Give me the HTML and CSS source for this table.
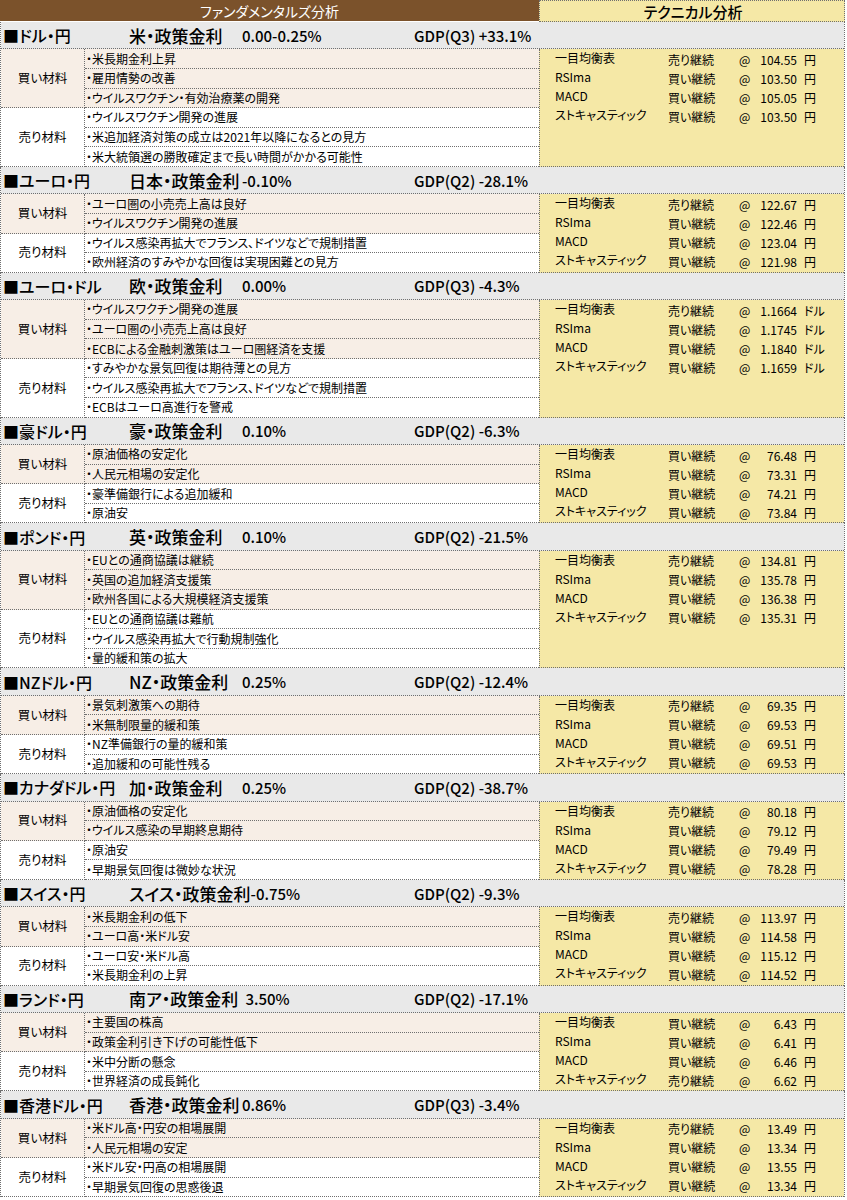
FILE: index.html
```html
<!DOCTYPE html>
<html lang="ja">
<head>
<meta charset="utf-8">
<title>為替 ファンダメンタルズ・テクニカル分析</title>
<link rel="stylesheet" href="styles.css">
</head>
<body>
<div class="sheet">
  <div class="top">
    <div class="top-fund">ファンダメンタルズ分析</div>
    <div class="top-tech">テクニカル分析</div>
  </div>

  <section class="pair">
    <div class="pair-head"><span class="pair-name">■ドル・円</span><span class="policy"><span class="policy-label">米・政策金利</span><span class="rate">0.00-0.25%</span></span><span class="gdp">GDP(Q3) +33.1%</span></div>
    <div class="pair-body">
      <div class="fund">
        <div class="group buy"><div class="group-label">買い材料</div><ul class="items"><li>・米長期金利上昇</li><li>・雇用情勢の改善</li><li>・ウイルスワクチン・有効治療薬の開発</li></ul></div>
        <div class="group sell"><div class="group-label">売り材料</div><ul class="items"><li>・ウイルスワクチン開発の進展</li><li>・米追加経済対策の成立は2021年以降になるとの見方</li><li>・米大統領選の勝敗確定まで長い時間がかかる可能性</li></ul></div>
      </div>
      <div class="tech">
        <div class="tech-row"><span class="tech-name">一目均衡表</span><span class="tech-signal">売り継続</span><span class="tech-at">@</span><span class="tech-value">104.55</span><span class="tech-unit">円</span></div>
        <div class="tech-row"><span class="tech-name">RSIma</span><span class="tech-signal">買い継続</span><span class="tech-at">@</span><span class="tech-value">103.50</span><span class="tech-unit">円</span></div>
        <div class="tech-row"><span class="tech-name">MACD</span><span class="tech-signal">買い継続</span><span class="tech-at">@</span><span class="tech-value">105.05</span><span class="tech-unit">円</span></div>
        <div class="tech-row"><span class="tech-name">ストキャスティック</span><span class="tech-signal">買い継続</span><span class="tech-at">@</span><span class="tech-value">103.50</span><span class="tech-unit">円</span></div>
      </div>
    </div>
  </section>

  <section class="pair">
    <div class="pair-head"><span class="pair-name">■ユーロ・円</span><span class="policy"><span class="policy-label">日本・政策金利</span><span class="rate">-0.10%</span></span><span class="gdp">GDP(Q2) -28.1%</span></div>
    <div class="pair-body">
      <div class="fund">
        <div class="group buy"><div class="group-label">買い材料</div><ul class="items"><li>・ユーロ圏の小売売上高は良好</li><li>・ウイルスワクチン開発の進展</li></ul></div>
        <div class="group sell"><div class="group-label">売り材料</div><ul class="items"><li>・ウイルス感染再拡大でフランス、ドイツなどで規制措置</li><li>・欧州経済のすみやかな回復は実現困難との見方</li></ul></div>
      </div>
      <div class="tech">
        <div class="tech-row"><span class="tech-name">一目均衡表</span><span class="tech-signal">売り継続</span><span class="tech-at">@</span><span class="tech-value">122.67</span><span class="tech-unit">円</span></div>
        <div class="tech-row"><span class="tech-name">RSIma</span><span class="tech-signal">買い継続</span><span class="tech-at">@</span><span class="tech-value">122.46</span><span class="tech-unit">円</span></div>
        <div class="tech-row"><span class="tech-name">MACD</span><span class="tech-signal">買い継続</span><span class="tech-at">@</span><span class="tech-value">123.04</span><span class="tech-unit">円</span></div>
        <div class="tech-row"><span class="tech-name">ストキャスティック</span><span class="tech-signal">買い継続</span><span class="tech-at">@</span><span class="tech-value">121.98</span><span class="tech-unit">円</span></div>
      </div>
    </div>
  </section>

  <section class="pair">
    <div class="pair-head"><span class="pair-name">■ユーロ・ドル</span><span class="policy"><span class="policy-label">欧・政策金利</span><span class="rate">0.00%</span></span><span class="gdp">GDP(Q3) -4.3%</span></div>
    <div class="pair-body">
      <div class="fund">
        <div class="group buy"><div class="group-label">買い材料</div><ul class="items"><li>・ウイルスワクチン開発の進展</li><li>・ユーロ圏の小売売上高は良好</li><li>・ECBによる金融刺激策はユーロ圏経済を支援</li></ul></div>
        <div class="group sell"><div class="group-label">売り材料</div><ul class="items"><li>・すみやかな景気回復は期待薄との見方</li><li>・ウイルス感染再拡大でフランス、ドイツなどで規制措置</li><li>・ECBはユーロ高進行を警戒</li></ul></div>
      </div>
      <div class="tech">
        <div class="tech-row"><span class="tech-name">一目均衡表</span><span class="tech-signal">売り継続</span><span class="tech-at">@</span><span class="tech-value">1.1664</span><span class="tech-unit">ドル</span></div>
        <div class="tech-row"><span class="tech-name">RSIma</span><span class="tech-signal">買い継続</span><span class="tech-at">@</span><span class="tech-value">1.1745</span><span class="tech-unit">ドル</span></div>
        <div class="tech-row"><span class="tech-name">MACD</span><span class="tech-signal">買い継続</span><span class="tech-at">@</span><span class="tech-value">1.1840</span><span class="tech-unit">ドル</span></div>
        <div class="tech-row"><span class="tech-name">ストキャスティック</span><span class="tech-signal">買い継続</span><span class="tech-at">@</span><span class="tech-value">1.1659</span><span class="tech-unit">ドル</span></div>
      </div>
    </div>
  </section>

  <section class="pair">
    <div class="pair-head"><span class="pair-name">■豪ドル・円</span><span class="policy"><span class="policy-label">豪・政策金利</span><span class="rate">0.10%</span></span><span class="gdp">GDP(Q2) -6.3%</span></div>
    <div class="pair-body">
      <div class="fund">
        <div class="group buy"><div class="group-label">買い材料</div><ul class="items"><li>・原油価格の安定化</li><li>・人民元相場の安定化</li></ul></div>
        <div class="group sell"><div class="group-label">売り材料</div><ul class="items"><li>・豪準備銀行による追加緩和</li><li>・原油安</li></ul></div>
      </div>
      <div class="tech">
        <div class="tech-row"><span class="tech-name">一目均衡表</span><span class="tech-signal">買い継続</span><span class="tech-at">@</span><span class="tech-value">76.48</span><span class="tech-unit">円</span></div>
        <div class="tech-row"><span class="tech-name">RSIma</span><span class="tech-signal">買い継続</span><span class="tech-at">@</span><span class="tech-value">73.31</span><span class="tech-unit">円</span></div>
        <div class="tech-row"><span class="tech-name">MACD</span><span class="tech-signal">買い継続</span><span class="tech-at">@</span><span class="tech-value">74.21</span><span class="tech-unit">円</span></div>
        <div class="tech-row"><span class="tech-name">ストキャスティック</span><span class="tech-signal">買い継続</span><span class="tech-at">@</span><span class="tech-value">73.84</span><span class="tech-unit">円</span></div>
      </div>
    </div>
  </section>

  <section class="pair">
    <div class="pair-head"><span class="pair-name">■ポンド・円</span><span class="policy"><span class="policy-label">英・政策金利</span><span class="rate">0.10%</span></span><span class="gdp">GDP(Q2) -21.5%</span></div>
    <div class="pair-body">
      <div class="fund">
        <div class="group buy"><div class="group-label">買い材料</div><ul class="items"><li>・EUとの通商協議は継続</li><li>・英国の追加経済支援策</li><li>・欧州各国による大規模経済支援策</li></ul></div>
        <div class="group sell"><div class="group-label">売り材料</div><ul class="items"><li>・EUとの通商協議は難航</li><li>・ウイルス感染再拡大で行動規制強化</li><li>・量的緩和策の拡大</li></ul></div>
      </div>
      <div class="tech">
        <div class="tech-row"><span class="tech-name">一目均衡表</span><span class="tech-signal">売り継続</span><span class="tech-at">@</span><span class="tech-value">134.81</span><span class="tech-unit">円</span></div>
        <div class="tech-row"><span class="tech-name">RSIma</span><span class="tech-signal">買い継続</span><span class="tech-at">@</span><span class="tech-value">135.78</span><span class="tech-unit">円</span></div>
        <div class="tech-row"><span class="tech-name">MACD</span><span class="tech-signal">買い継続</span><span class="tech-at">@</span><span class="tech-value">136.38</span><span class="tech-unit">円</span></div>
        <div class="tech-row"><span class="tech-name">ストキャスティック</span><span class="tech-signal">買い継続</span><span class="tech-at">@</span><span class="tech-value">135.31</span><span class="tech-unit">円</span></div>
      </div>
    </div>
  </section>

  <section class="pair">
    <div class="pair-head"><span class="pair-name">■NZドル・円</span><span class="policy"><span class="policy-label">NZ・政策金利</span><span class="rate">0.25%</span></span><span class="gdp">GDP(Q2) -12.4%</span></div>
    <div class="pair-body">
      <div class="fund">
        <div class="group buy"><div class="group-label">買い材料</div><ul class="items"><li>・景気刺激策への期待</li><li>・米無制限量的緩和策</li></ul></div>
        <div class="group sell"><div class="group-label">売り材料</div><ul class="items"><li>・NZ準備銀行の量的緩和策</li><li>・追加緩和の可能性残る</li></ul></div>
      </div>
      <div class="tech">
        <div class="tech-row"><span class="tech-name">一目均衡表</span><span class="tech-signal">売り継続</span><span class="tech-at">@</span><span class="tech-value">69.35</span><span class="tech-unit">円</span></div>
        <div class="tech-row"><span class="tech-name">RSIma</span><span class="tech-signal">買い継続</span><span class="tech-at">@</span><span class="tech-value">69.53</span><span class="tech-unit">円</span></div>
        <div class="tech-row"><span class="tech-name">MACD</span><span class="tech-signal">買い継続</span><span class="tech-at">@</span><span class="tech-value">69.51</span><span class="tech-unit">円</span></div>
        <div class="tech-row"><span class="tech-name">ストキャスティック</span><span class="tech-signal">買い継続</span><span class="tech-at">@</span><span class="tech-value">69.53</span><span class="tech-unit">円</span></div>
      </div>
    </div>
  </section>

  <section class="pair">
    <div class="pair-head"><span class="pair-name">■カナダドル・円</span><span class="policy"><span class="policy-label">加・政策金利</span><span class="rate">0.25%</span></span><span class="gdp">GDP(Q2) -38.7%</span></div>
    <div class="pair-body">
      <div class="fund">
        <div class="group buy"><div class="group-label">買い材料</div><ul class="items"><li>・原油価格の安定化</li><li>・ウイルス感染の早期終息期待</li></ul></div>
        <div class="group sell"><div class="group-label">売り材料</div><ul class="items"><li>・原油安</li><li>・早期景気回復は微妙な状況</li></ul></div>
      </div>
      <div class="tech">
        <div class="tech-row"><span class="tech-name">一目均衡表</span><span class="tech-signal">売り継続</span><span class="tech-at">@</span><span class="tech-value">80.18</span><span class="tech-unit">円</span></div>
        <div class="tech-row"><span class="tech-name">RSIma</span><span class="tech-signal">買い継続</span><span class="tech-at">@</span><span class="tech-value">79.12</span><span class="tech-unit">円</span></div>
        <div class="tech-row"><span class="tech-name">MACD</span><span class="tech-signal">買い継続</span><span class="tech-at">@</span><span class="tech-value">79.49</span><span class="tech-unit">円</span></div>
        <div class="tech-row"><span class="tech-name">ストキャスティック</span><span class="tech-signal">買い継続</span><span class="tech-at">@</span><span class="tech-value">78.28</span><span class="tech-unit">円</span></div>
      </div>
    </div>
  </section>

  <section class="pair">
    <div class="pair-head"><span class="pair-name">■スイス・円</span><span class="policy"><span class="policy-label">スイス・政策金利</span><span class="rate">-0.75%</span></span><span class="gdp">GDP(Q2) -9.3%</span></div>
    <div class="pair-body">
      <div class="fund">
        <div class="group buy"><div class="group-label">買い材料</div><ul class="items"><li>・米長期金利の低下</li><li>・ユーロ高・米ドル安</li></ul></div>
        <div class="group sell"><div class="group-label">売り材料</div><ul class="items"><li>・ユーロ安・米ドル高</li><li>・米長期金利の上昇</li></ul></div>
      </div>
      <div class="tech">
        <div class="tech-row"><span class="tech-name">一目均衡表</span><span class="tech-signal">売り継続</span><span class="tech-at">@</span><span class="tech-value">113.97</span><span class="tech-unit">円</span></div>
        <div class="tech-row"><span class="tech-name">RSIma</span><span class="tech-signal">買い継続</span><span class="tech-at">@</span><span class="tech-value">114.58</span><span class="tech-unit">円</span></div>
        <div class="tech-row"><span class="tech-name">MACD</span><span class="tech-signal">買い継続</span><span class="tech-at">@</span><span class="tech-value">115.12</span><span class="tech-unit">円</span></div>
        <div class="tech-row"><span class="tech-name">ストキャスティック</span><span class="tech-signal">買い継続</span><span class="tech-at">@</span><span class="tech-value">114.52</span><span class="tech-unit">円</span></div>
      </div>
    </div>
  </section>

  <section class="pair">
    <div class="pair-head"><span class="pair-name">■ランド・円</span><span class="policy"><span class="policy-label">南ア・政策金利</span><span class="rate"> 3.50%</span></span><span class="gdp">GDP(Q2) -17.1%</span></div>
    <div class="pair-body">
      <div class="fund">
        <div class="group buy"><div class="group-label">買い材料</div><ul class="items"><li>・主要国の株高</li><li>・政策金利引き下げの可能性低下</li></ul></div>
        <div class="group sell"><div class="group-label">売り材料</div><ul class="items"><li>・米中分断の懸念</li><li>・世界経済の成長鈍化</li></ul></div>
      </div>
      <div class="tech">
        <div class="tech-row"><span class="tech-name">一目均衡表</span><span class="tech-signal">買い継続</span><span class="tech-at">@</span><span class="tech-value">6.43</span><span class="tech-unit">円</span></div>
        <div class="tech-row"><span class="tech-name">RSIma</span><span class="tech-signal">買い継続</span><span class="tech-at">@</span><span class="tech-value">6.41</span><span class="tech-unit">円</span></div>
        <div class="tech-row"><span class="tech-name">MACD</span><span class="tech-signal">買い継続</span><span class="tech-at">@</span><span class="tech-value">6.46</span><span class="tech-unit">円</span></div>
        <div class="tech-row"><span class="tech-name">ストキャスティック</span><span class="tech-signal">売り継続</span><span class="tech-at">@</span><span class="tech-value">6.62</span><span class="tech-unit">円</span></div>
      </div>
    </div>
  </section>

  <section class="pair">
    <div class="pair-head"><span class="pair-name">■香港ドル・円</span><span class="policy"><span class="policy-label">香港・政策金利</span><span class="rate">0.86%</span></span><span class="gdp">GDP(Q3) -3.4%</span></div>
    <div class="pair-body">
      <div class="fund">
        <div class="group buy"><div class="group-label">買い材料</div><ul class="items"><li>・米ドル高・円安の相場展開</li><li>・人民元相場の安定</li></ul></div>
        <div class="group sell"><div class="group-label">売り材料</div><ul class="items"><li>・米ドル安・円高の相場展開</li><li>・早期景気回復の思惑後退</li></ul></div>
      </div>
      <div class="tech">
        <div class="tech-row"><span class="tech-name">一目均衡表</span><span class="tech-signal">売り継続</span><span class="tech-at">@</span><span class="tech-value">13.49</span><span class="tech-unit">円</span></div>
        <div class="tech-row"><span class="tech-name">RSIma</span><span class="tech-signal">買い継続</span><span class="tech-at">@</span><span class="tech-value">13.34</span><span class="tech-unit">円</span></div>
        <div class="tech-row"><span class="tech-name">MACD</span><span class="tech-signal">買い継続</span><span class="tech-at">@</span><span class="tech-value">13.55</span><span class="tech-unit">円</span></div>
        <div class="tech-row"><span class="tech-name">ストキャスティック</span><span class="tech-signal">買い継続</span><span class="tech-at">@</span><span class="tech-value">13.34</span><span class="tech-unit">円</span></div>
      </div>
    </div>
  </section>
</div>
</body>
</html>
```
FILE: styles.css
```css
html, body {
  margin: 0;
  padding: 0;
  background: #ffffff;
}

body {
  font-family: "Noto Sans CJK JP", "Noto Sans", sans-serif;
  font-feature-settings: "palt";
  color: #000;
  line-height: 1;
}

.sheet {
  width: 845px;
}

/* top header */
.top {
  display: flex;
  height: 22px;
  box-sizing: border-box;
}

.top-fund {
  width: 539px;
  height: 21px;
  background: #7b522b;
  color: #ffffff;
  font-size: 14px;
  display: flex;
  align-items: center;
  justify-content: center;
}

.top-tech {
  flex: 1;
  background: #f5e8a6;
  border: 1px dotted #6f6f6f;
  box-sizing: border-box;
  font-size: 15px;
  font-weight: 500;
  display: flex;
  align-items: center;
  justify-content: center;
  padding-left: 2px;
}

/* currency pair */
.pair {
  border-left: 1px dotted #6f6f6f;
  border-right: 1px dotted #6f6f6f;
}

.pair-head {
  height: 27.4px;
  box-sizing: border-box;
  background: #e9e9e9;
  border-bottom: 1px dotted #6f6f6f;
  display: grid;
  grid-template-columns: 126px 285px auto;
  align-items: center;
  padding-left: 2px;
  font-size: 17px;
  font-weight: 500;
  white-space: nowrap;
}

.pair-name {
  font-size: 16px;
}

.policy {
  display: flex;
  align-items: center;
}

.policy-label {
  min-width: 113px;
}

.rate,
.gdp {
  font-size: 15px;
  white-space: pre;
}

.pair-body {
  display: flex;
}

.fund {
  width: 538px;
}

.group {
  display: flex;
}

.group.buy {
  background: #f7eee6;
}

.group.sell {
  background: #ffffff;
}

.group-label {
  width: 84px;
  box-sizing: border-box;
  border-right: 1px dotted #6f6f6f;
  border-bottom: 1px dotted #6f6f6f;
  display: flex;
  align-items: center;
  justify-content: center;
  font-size: 12.5px;
}

.items {
  list-style: none;
  margin: 0;
  padding: 0;
  flex: 1;
}

.items li {
  height: 19.6px;
  box-sizing: border-box;
  border-bottom: 1px dotted #6f6f6f;
  display: flex;
  align-items: center;
  padding-left: 1px;
  font-size: 12px;
  white-space: nowrap;
}

/* technical box */
.tech {
  flex: 1;
  background: #f5e8a6;
  border-left: 1px dotted #6f6f6f;
  border-bottom: 1px dotted #6f6f6f;
  padding-top: 1px;
  box-sizing: border-box;
}

.tech-row {
  display: grid;
  grid-template-columns: 113px 71px 20px 38px auto;
  align-items: center;
  height: 19px;
  padding-left: 15px;
  font-size: 12px;
  white-space: nowrap;
}

.tech-name {
  padding-bottom: 3px;
}

.tech-value {
  text-align: right;
}

.tech-unit {
  padding-left: 7px;
}
```
